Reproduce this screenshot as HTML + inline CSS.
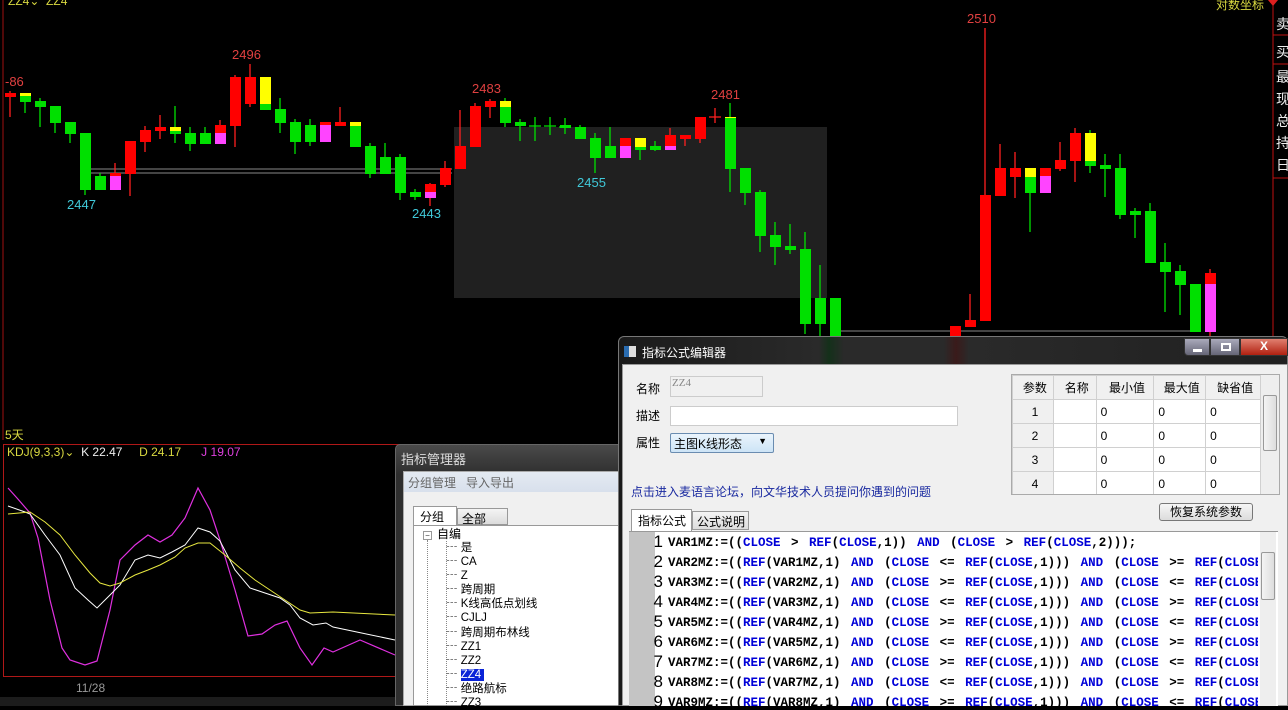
<!DOCTYPE html>
<html><head><meta charset="utf-8"><style>
*{margin:0;padding:0;box-sizing:border-box}
body{width:1288px;height:706px;overflow:hidden;background:#000;position:relative;font-family:"Liberation Sans","Noto Sans CJK SC",sans-serif;font-size:12px}
.a{position:absolute;white-space:nowrap}
.lbl{font-size:13px}
.code{font-family:"Liberation Mono","DejaVu Sans Mono",monospace;font-weight:bold;font-size:12.5px;word-spacing:3px;color:#000}
.code b{color:#0000d8;font-weight:bold}
.ln{font-family:"Liberation Sans",sans-serif;font-size:17px;color:#000;text-align:right;width:34px}
td{border:1px solid #d0d0d0;font-size:12px;height:24px;padding-left:4px}
</style></head><body>
<svg class="a" style="left:0;top:0" width="1288" height="706">
<line x1="3" y1="0" x2="3" y2="440" stroke="#a01010"/>
<rect x="454" y="127" width="373" height="171" fill="#202020"/>
<path d="M80 169H452M80 173H452M830 331H1200" stroke="#888" stroke-width="1"/>
<g stroke="#ff2020" stroke-width="1.3" fill="none"><path d="M10 91V117M115 163V176M130 141V196M145 126V152M160 115V139M220 120V125M235 75V147M250 64V107M340 107V122M430 183V206M445 161V187M460 110V169M475 103V147M490 99V118M670 128V135M685 135V146M700 117V143M715 108V123M709 117H721M955 326V338M970 294V327M985 28V321M1000 144V196M1015 152V198M1060 142V171M1075 128V182M1210 269V336"/></g>
<g stroke="#00e000" stroke-width="1.3" fill="none"><path d="M25 93V113M40 98V127M55 106V133M70 122V143M85 133V195M100 173V190M175 106V143M190 127V151M205 127V144M265 104V110M280 98V133M295 119V154M310 119V146M355 126V147M370 143V178M385 143V174M400 154V200M415 189V200M505 98V127M520 119V141M535 117V141M529 126H541M550 117V135M544 126H556M565 118V134M559 127H571M580 125V139M595 133V173M610 127V158M640 147V160M655 141V151M730 103V192M745 168V205M760 190V252M775 222V265M790 224V254M805 232V334M820 265V337M835 298V340M1030 177V232M1090 130V173M1105 154V197M1120 154V219M1135 208V238M1150 203V263M1165 243V312M1180 265V315M1195 284V332"/></g>
<g fill="#ff0000">
<rect x="5" y="93" width="11" height="4"/><rect x="110" y="173" width="11" height="3"/><rect x="125" y="141" width="11" height="33"/><rect x="140" y="130" width="11" height="12"/><rect x="155" y="127" width="11" height="4"/><rect x="215" y="125" width="11" height="8"/><rect x="230" y="77" width="11" height="49"/><rect x="245" y="77" width="11" height="27"/><rect x="320" y="122" width="11" height="3"/><rect x="335" y="122" width="11" height="4"/><rect x="425" y="184" width="11" height="8"/><rect x="440" y="168" width="11" height="17"/><rect x="455" y="146" width="11" height="23"/><rect x="470" y="106" width="11" height="41"/><rect x="485" y="101" width="11" height="6"/><rect x="620" y="138" width="11" height="8"/><rect x="665" y="135" width="11" height="11"/><rect x="680" y="135" width="11" height="4"/><rect x="695" y="117" width="11" height="22"/><rect x="950" y="326" width="11" height="12"/><rect x="965" y="320" width="11" height="7"/><rect x="980" y="195" width="11" height="126"/><rect x="995" y="168" width="11" height="28"/><rect x="1010" y="168" width="11" height="9"/><rect x="1040" y="168" width="11" height="8"/><rect x="1055" y="160" width="11" height="9"/><rect x="1070" y="133" width="11" height="28"/><rect x="1205" y="273" width="11" height="11"/></g>
<g fill="#ffff00">
<rect x="20" y="93" width="11" height="3"/><rect x="170" y="127" width="11" height="4"/><rect x="260" y="77" width="11" height="27"/><rect x="350" y="122" width="11" height="4"/><rect x="500" y="101" width="11" height="6"/><rect x="635" y="138" width="11" height="9"/><rect x="1025" y="168" width="11" height="9"/><rect x="1085" y="133" width="11" height="28"/><rect x="725" y="117" width="11" height="1"/></g>
<g fill="#00e000">
<rect x="20" y="96" width="11" height="6"/><rect x="35" y="101" width="11" height="6"/><rect x="50" y="106" width="11" height="17"/><rect x="65" y="122" width="11" height="12"/><rect x="80" y="133" width="11" height="57"/><rect x="95" y="176" width="11" height="14"/><rect x="170" y="131" width="11" height="3"/><rect x="185" y="133" width="11" height="11"/><rect x="200" y="133" width="11" height="11"/><rect x="260" y="104" width="11" height="6"/><rect x="275" y="109" width="11" height="14"/><rect x="290" y="122" width="11" height="20"/><rect x="305" y="125" width="11" height="17"/><rect x="350" y="126" width="11" height="21"/><rect x="365" y="146" width="11" height="28"/><rect x="380" y="157" width="11" height="17"/><rect x="395" y="157" width="11" height="36"/><rect x="410" y="192" width="11" height="5"/><rect x="500" y="107" width="11" height="16"/><rect x="515" y="122" width="11" height="4"/><rect x="560" y="125" width="11" height="3"/><rect x="575" y="127" width="11" height="12"/><rect x="590" y="138" width="11" height="20"/><rect x="605" y="146" width="11" height="12"/><rect x="635" y="147" width="11" height="3"/><rect x="650" y="146" width="11" height="4"/><rect x="725" y="118" width="11" height="51"/><rect x="740" y="168" width="11" height="25"/><rect x="755" y="192" width="11" height="44"/><rect x="770" y="235" width="11" height="12"/><rect x="785" y="246" width="11" height="4"/><rect x="800" y="249" width="11" height="75"/><rect x="815" y="298" width="11" height="26"/><rect x="830" y="298" width="11" height="42"/><rect x="1025" y="177" width="11" height="16"/><rect x="1085" y="161" width="11" height="5"/><rect x="1100" y="165" width="11" height="4"/><rect x="1115" y="168" width="11" height="47"/><rect x="1130" y="211" width="11" height="4"/><rect x="1145" y="211" width="11" height="52"/><rect x="1160" y="262" width="11" height="10"/><rect x="1175" y="271" width="11" height="14"/><rect x="1190" y="284" width="11" height="48"/></g>
<g fill="#ff44ff">
<rect x="110" y="176" width="11" height="14"/><rect x="215" y="133" width="11" height="11"/><rect x="320" y="125" width="11" height="17"/><rect x="425" y="192" width="11" height="6"/><rect x="620" y="146" width="11" height="12"/><rect x="665" y="146" width="11" height="4"/><rect x="1040" y="176" width="11" height="17"/><rect x="1205" y="284" width="11" height="48"/></g>
<path d="M1273 0V706M1273 35H1288M1273 64H1288M1273 178H1288" stroke="#c01010"/>
<path d="M1268 0H1278L1273 6Z" fill="#e02020"/>
<rect x="3.5" y="444.5" width="600" height="232" fill="none" stroke="#b01818"/>
<polyline fill="none" stroke="#e030e0" stroke-width="1.2" points="8,488 17,498 30,513 38,538 50,600 62,648 70,660 85,665 97,661 110,610 120,560 135,545 148,535 160,542 172,535 185,518 198,488 210,510 220,540 235,590 248,636 262,634 275,625 287,621 300,648 312,665 324,648 333,652 360,640 395,655"/>
<polyline fill="none" stroke="#ffffff" stroke-width="1" points="8,506 25,512 30,514 45,535 60,555 75,588 88,600 97,608 110,595 120,585 135,560 148,555 160,558 172,552 185,545 198,528 210,532 220,541 235,570 250,588 265,593 280,598 290,605 300,618 313,625 326,623 333,627 395,640"/>
<polyline fill="none" stroke="#e8e840" stroke-width="1" points="8,514 30,512 45,522 60,535 75,555 90,573 100,583 110,586 120,583 135,575 148,570 160,565 175,557 185,548 198,543 210,543 225,555 240,568 255,580 270,590 285,600 300,610 310,613 333,612 395,615"/>
<rect x="0" y="697" width="1288" height="9" fill="#1c1c1c"/>
</svg>
<div class="a" style="left:8px;top:-6px;color:#d8d840;font-size:12px">ZZ4⌄&nbsp;&nbsp;ZZ4</div>
<div class="a" style="left:1216px;top:-4px;color:#d8d840;font-size:12px">对数坐标</div>
<div class="a lbl" style="left:5px;top:74px;color:#e04040">-86</div>
<div class="a lbl" style="left:232px;top:47px;color:#e04040">2496</div>
<div class="a lbl" style="left:67px;top:197px;color:#40c8d8">2447</div>
<div class="a lbl" style="left:412px;top:206px;color:#40c8d8">2443</div>
<div class="a lbl" style="left:472px;top:81px;color:#e04040">2483</div>
<div class="a lbl" style="left:577px;top:175px;color:#40c8d8">2455</div>
<div class="a lbl" style="left:711px;top:87px;color:#e04040">2481</div>
<div class="a lbl" style="left:967px;top:11px;color:#e04040">2510</div>
<div class="a" style="left:1276px;top:13px;color:#eee;font-size:14px;line-height:22px">卖</div>
<div class="a" style="left:1276px;top:41px;color:#eee;font-size:14px;line-height:22px">买</div>
<div class="a" style="left:1276px;top:66px;color:#eee;font-size:14px;line-height:22px">最<br>现<br>总<br>持<br>日</div>
<div class="a" style="left:5px;top:426px;color:#d8d840">5天</div>
<div class="a" style="left:7px;top:445px;color:#d8d840">KDJ(9,3,3)⌄ <span style="color:#eee">&nbsp;K 22.47</span> <span style="color:#d8d840">&nbsp;&nbsp;&nbsp;&nbsp;D 24.17</span> <span style="color:#e040e0">&nbsp;&nbsp;&nbsp;&nbsp;&nbsp;J 19.07</span></div>
<div class="a" style="left:76px;top:681px;color:#999">11/28</div>

<div class="a" style="left:395px;top:444px;width:230px;height:262px;background:linear-gradient(#4a4a4a,#2e2e2e 30px,#2e2e2e);border:1px solid #666;border-radius:5px 0 0 0"></div>
<div class="a" style="left:401px;top:449px;color:#ddd;font-size:13px">指标管理器</div>
<div class="a" style="left:403px;top:471px;width:222px;height:235px;background:#f0f0f0;border:1px solid #aaa"></div>
<div class="a" style="left:404px;top:472px;width:221px;height:20px;background:linear-gradient(#e4eaf2,#d8e0ec)"></div>
<div class="a" style="left:408px;top:474px;color:#666;font-size:12px">分组管理 &nbsp;&nbsp;导入导出</div>
<div class="a" style="left:413px;top:506px;width:44px;height:20px;background:#fff;border:1px solid #999;border-bottom:none;padding:1px 0 0 6px;font-size:12px">分组</div>
<div class="a" style="left:457px;top:508px;width:51px;height:17px;background:linear-gradient(#f4f4f4,#dcdcdc);border:1px solid #999;padding:1px 0 0 4px;font-size:12px">全部</div>
<div class="a" style="left:413px;top:525px;width:212px;height:181px;background:#fff;border:1px solid #999;border-right:none"></div>
<div class="a" style="left:423px;top:531px;width:9px;height:9px;border:1px solid #999;font-size:8px;line-height:7px;text-align:center;color:#333">−</div>
<div class="a" style="left:427px;top:540px;height:166px;border-left:1px dotted #888"></div>
<div class="a" style="left:446px;top:541px;height:165px;border-left:1px dotted #888"></div>
<div class="a" style="left:437px;top:527px;font-size:12px;line-height:14px">自编</div>
<div class="a" style="left:446px;top:541px;font-size:11.5px;line-height:14.1px;color:#000">
<div>┄ 是</div><div>┄ CA</div><div>┄ Z</div><div>┄ 跨周期</div><div>┄ K线高低点划线</div><div>┄ CJLJ</div><div>┄ 跨周期布林线</div><div>┄ ZZ1</div><div>┄ ZZ2</div><div>┄ <span style="background:#0a24d8;color:#fff">ZZ4&nbsp;</span></div><div>┄ 绝路航标</div><div>┄ ZZ3</div></div>

<div class="a" style="left:618px;top:336px;width:670px;height:370px;background:linear-gradient(90deg,#1a1a1a,#2a2a2a 200px,#14301a 210px,#2a2a2a 225px,#2a2a2a 325px,#3a1a1a 337px,#2a2a2a 350px,#202020);border:1px solid #777;border-radius:6px 6px 0 0"></div>
<div class="a" style="left:624px;top:346px;width:12px;height:11px;background:#ddd;border-left:5px solid #2a6cb0"></div>
<div class="a" style="left:642px;top:344px;color:#fff;font-size:12px">指标公式编辑器</div>
<div class="a" style="left:1184px;top:338px;width:26px;height:18px;background:linear-gradient(#aab,#667);border:1px solid #333;border-radius:0 0 0 4px"><div style="margin:10px 8px;width:9px;height:3px;background:#fff"></div></div>
<div class="a" style="left:1210px;top:338px;width:30px;height:18px;background:linear-gradient(#aab,#667);border:1px solid #333"><div style="margin:4px 10px;width:10px;height:8px;border:2px solid #fff"></div></div>
<div class="a" style="left:1240px;top:338px;width:48px;height:18px;background:linear-gradient(#e08070,#b02010);border:1px solid #333;color:#fff;font-weight:bold;text-align:center;font-size:12px">X</div>
<div class="a" style="left:622px;top:364px;width:666px;height:342px;background:#f0f0f0;border:1px solid #999"></div>
<div class="a" style="left:636px;top:380px">名称</div>
<div class="a" style="left:670px;top:376px;width:93px;height:21px;border:1px solid #ccc;background:#f0f0f0;font-family:'Liberation Serif',serif;font-size:11px;color:#888;padding-left:1px">ZZ4</div>
<div class="a" style="left:636px;top:407px">描述</div>
<div class="a" style="left:670px;top:406px;width:288px;height:20px;border:1px solid #ccc;background:#fff"></div>
<div class="a" style="left:636px;top:434px">属性</div>
<div class="a" style="left:670px;top:433px;width:104px;height:20px;border:1px solid #6a8cb0;background:linear-gradient(#eaf4fc,#cde4f6);border-radius:2px;padding:1px 3px">主图K线形态<span style="position:absolute;right:6px;top:2px;font-size:9px">▼</span></div>
<div class="a" style="left:631px;top:483px;color:#1a2aa0">点击进入麦语言论坛，向文华技术人员提问你遇到的问题</div>
<div class="a" style="left:1011px;top:374px;width:269px;height:121px;background:#fff;border:1px solid #aaa;overflow:hidden">
<table style="border-collapse:collapse;width:249px;text-align:left"><tr style="background:#f0f0f0"><td style="width:41px;text-align:center">参数</td><td style="width:43px;text-align:center">名称</td><td style="width:58px;text-align:center">最小值</td><td style="width:52px;text-align:center">最大值</td><td style="width:55px;text-align:center">缺省值</td></tr>
<tr><td style="background:#f0f0f0;text-align:center">1</td><td></td><td>0</td><td>0</td><td>0</td></tr>
<tr><td style="background:#f0f0f0;text-align:center">2</td><td></td><td>0</td><td>0</td><td>0</td></tr>
<tr><td style="background:#f0f0f0;text-align:center">3</td><td></td><td>0</td><td>0</td><td>0</td></tr>
<tr><td style="background:#f0f0f0;text-align:center">4</td><td></td><td>0</td><td>0</td><td>0</td></tr></table>
<div style="position:absolute;right:0;top:0;width:18px;height:121px;background:#eee"><div style="margin:20px 2px;height:56px;background:linear-gradient(90deg,#f4f4f4,#ddd);border:1px solid #999;border-radius:2px"></div></div></div>
<div class="a" style="left:1159px;top:503px;width:94px;height:18px;border:1px solid #777;border-radius:3px;background:linear-gradient(#f6f6f6,#dcdcdc);text-align:center;line-height:16px">恢复系统参数</div>
<div class="a" style="left:631px;top:509px;width:61px;height:22px;background:#fff;border:1px solid #999;border-bottom:none;padding:2px 0 0 6px">指标公式</div>
<div class="a" style="left:692px;top:511px;width:57px;height:19px;background:linear-gradient(#f4f4f4,#ddd);border:1px solid #999;padding:1px 0 0 4px">公式说明</div>
<div class="a" style="left:629px;top:531px;width:649px;height:175px;background:#fff;border-top:1px solid #999;overflow:hidden">
<div style="position:absolute;left:0;top:0;width:26px;height:175px;background:#c4c4c4"></div>
<div style="position:absolute;right:2px;top:0;width:16px;height:175px;background:#eee"><div style="margin:20px 1px;height:48px;background:linear-gradient(90deg,#f4f4f4,#ddd);border:1px solid #999;border-radius:2px"></div></div>
<div style="position:absolute;left:0;top:0;width:629px;height:175px;overflow:hidden">
<div class="ln a" style="left:0;top:0;line-height:20px">1<br>2<br>3<br>4<br>5<br>6<br>7<br>8<br>9</div>
<div class="code a" style="left:39px;top:1px;line-height:20px">
<div>VAR1MZ:=((<b>CLOSE</b> &gt; <b>REF</b>(<b>CLOSE</b>,1)) <b>AND</b> (<b>CLOSE</b> &gt; <b>REF</b>(<b>CLOSE</b>,2)));</div>
<div>VAR2MZ:=((<b>REF</b>(VAR1MZ,1) <b>AND</b> (<b>CLOSE</b> &lt;= <b>REF</b>(<b>CLOSE</b>,1))) <b>AND</b> (<b>CLOSE</b> &gt;= <b>REF</b>(<b>CLOSE</b>,2)));</div>
<div>VAR3MZ:=((<b>REF</b>(VAR2MZ,1) <b>AND</b> (<b>CLOSE</b> &gt;= <b>REF</b>(<b>CLOSE</b>,1))) <b>AND</b> (<b>CLOSE</b> &lt;= <b>REF</b>(<b>CLOSE</b>,2)));</div>
<div>VAR4MZ:=((<b>REF</b>(VAR3MZ,1) <b>AND</b> (<b>CLOSE</b> &lt;= <b>REF</b>(<b>CLOSE</b>,1))) <b>AND</b> (<b>CLOSE</b> &gt;= <b>REF</b>(<b>CLOSE</b>,2)));</div>
<div>VAR5MZ:=((<b>REF</b>(VAR4MZ,1) <b>AND</b> (<b>CLOSE</b> &gt;= <b>REF</b>(<b>CLOSE</b>,1))) <b>AND</b> (<b>CLOSE</b> &lt;= <b>REF</b>(<b>CLOSE</b>,2)));</div>
<div>VAR6MZ:=((<b>REF</b>(VAR5MZ,1) <b>AND</b> (<b>CLOSE</b> &lt;= <b>REF</b>(<b>CLOSE</b>,1))) <b>AND</b> (<b>CLOSE</b> &gt;= <b>REF</b>(<b>CLOSE</b>,2)));</div>
<div>VAR7MZ:=((<b>REF</b>(VAR6MZ,1) <b>AND</b> (<b>CLOSE</b> &gt;= <b>REF</b>(<b>CLOSE</b>,1))) <b>AND</b> (<b>CLOSE</b> &lt;= <b>REF</b>(<b>CLOSE</b>,2)));</div>
<div>VAR8MZ:=((<b>REF</b>(VAR7MZ,1) <b>AND</b> (<b>CLOSE</b> &lt;= <b>REF</b>(<b>CLOSE</b>,1))) <b>AND</b> (<b>CLOSE</b> &gt;= <b>REF</b>(<b>CLOSE</b>,2)));</div>
<div>VAR9MZ:=((<b>REF</b>(VAR8MZ,1) <b>AND</b> (<b>CLOSE</b> &gt;= <b>REF</b>(<b>CLOSE</b>,1))) <b>AND</b> (<b>CLOSE</b> &lt;= <b>REF</b>(<b>CLOSE</b>,2)));</div>
</div></div></div>
</body></html>
